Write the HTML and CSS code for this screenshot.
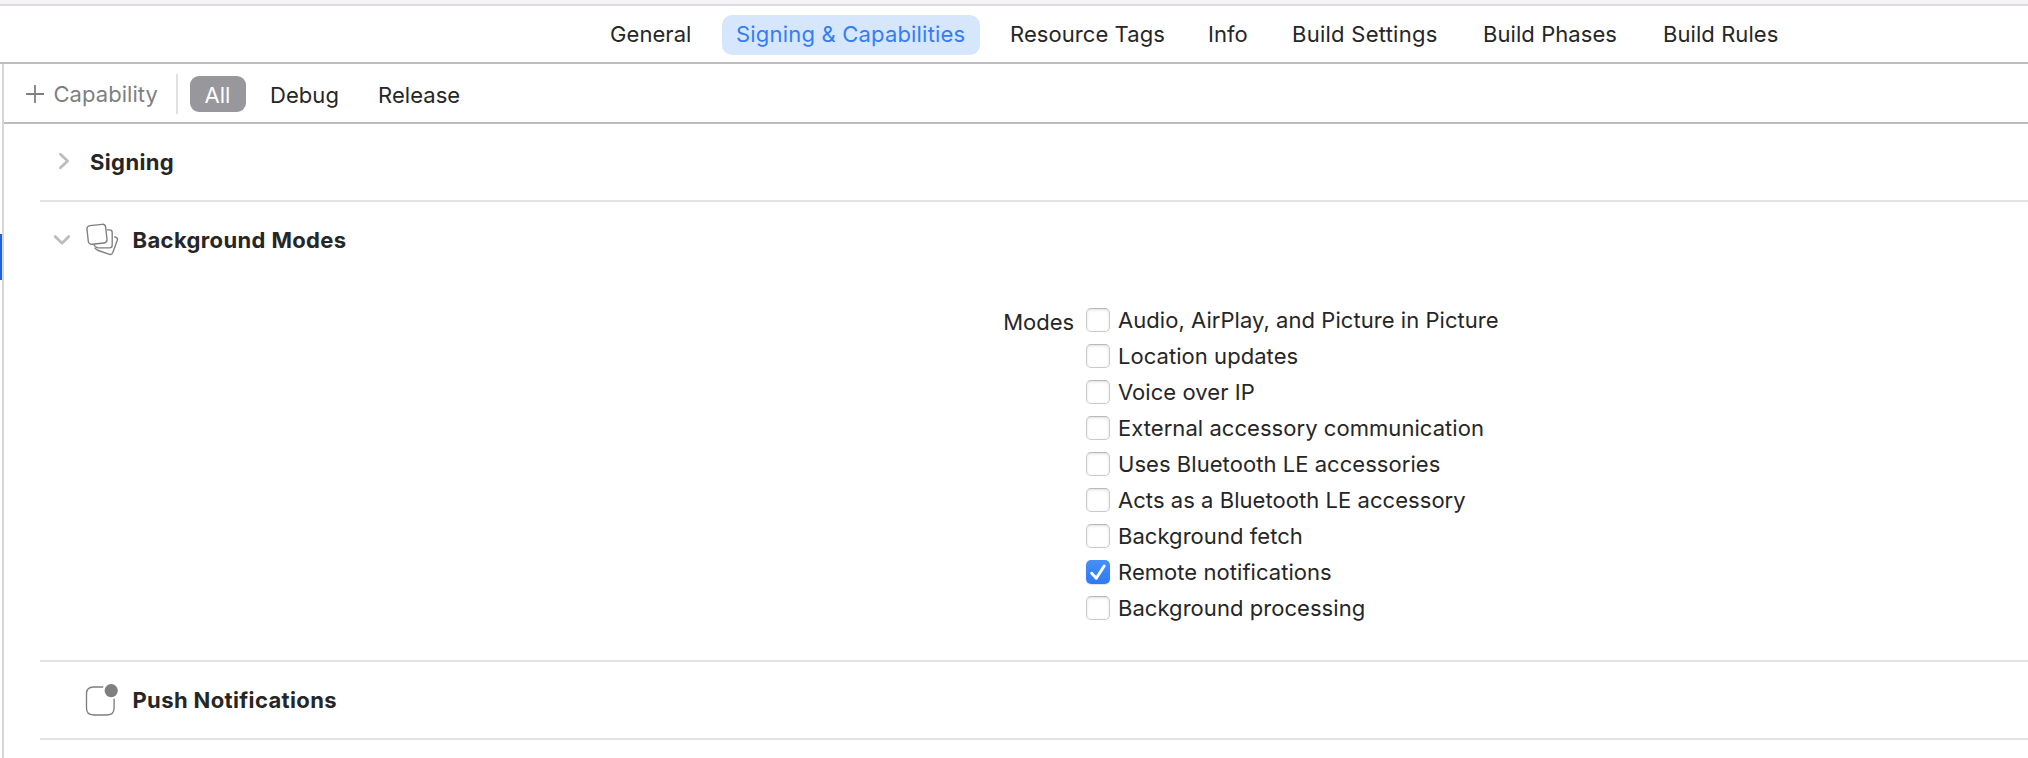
FILE: index.html
```html
<!DOCTYPE html>
<html lang="en">
<head>
<meta charset="utf-8">
<title>Signing &amp; Capabilities</title>
<link rel="stylesheet" href="styles.css">
</head>
<body>
<div class="window">
  <nav class="tabs">
    <span class="tab">General</span>
    <span class="tab tab-active">Signing &amp; Capabilities</span>
    <span class="tab">Resource Tags</span>
    <span class="tab">Info</span>
    <span class="tab tab-wide">Build Settings</span>
    <span class="tab">Build Phases</span>
    <span class="tab">Build Rules</span>
  </nav>
  <div class="body">
    <aside class="navigator"><div class="selection"></div></aside>
    <main class="editor">
      <div class="toolbar">
        <div class="add">
          <svg class="plus" width="18" height="18" viewBox="0 0 18 18"><path d="M9 .5v17M.5 9h17"/></svg>
          <span>Capability</span>
        </div>
        <div class="separator"></div>
        <span class="scope scope-active">All</span>
        <span class="scope scope-debug">Debug</span>
        <span class="scope">Release</span>
      </div>

      <section class="section signing">
        <div class="head">
          <svg class="chevron" width="18" height="18" viewBox="0 0 18 18"><path d="M6.4 2.2 13.6 9l-7.2 6.8"/></svg>
          <h2 class="title">Signing</h2>
        </div>
      </section>

      <section class="section modes">
        <div class="head">
          <svg class="chevron" width="18" height="18" viewBox="0 0 18 18"><path d="M2.2 5.4 9 12.2l6.8-6.8"/></svg>
          <svg class="icon" width="34" height="34" viewBox="0 0 34 34">
            <path d="M28.2 13.7l1.6.6q2.2.8 1.5 3l-4.6 12.5q-.9 2.2-3.1 1.5l-11.3-3.8q-2.3-.8-3.7-2.8"/>
            <path d="M21.1 6.9h2.5q2.6 0 2.6 2.6v12.7q0 2.6-2.6 2.6H12.2q-3 0-4.6-3.7"/>
            <rect x="1.6" y="1.9" width="18.8" height="18.8" rx="3.4" transform="rotate(-6 11 11.3)"/>
          </svg>
          <h2 class="title">Background Modes</h2>
        </div>
        <div class="form">
          <span class="form-label">Modes</span>
          <div class="options">
            <div class="option"><span class="box"></span>Audio, AirPlay, and Picture in Picture</div>
            <div class="option"><span class="box"></span>Location updates</div>
            <div class="option"><span class="box"></span>Voice over IP</div>
            <div class="option"><span class="box"></span>External accessory communication</div>
            <div class="option"><span class="box"></span>Uses Bluetooth LE accessories</div>
            <div class="option"><span class="box"></span>Acts as a Bluetooth LE accessory</div>
            <div class="option"><span class="box"></span>Background fetch</div>
            <div class="option"><span class="box box-checked"><svg width="24" height="24" viewBox="0 0 24 24"><path d="M5.7 13.2 10.3 18.3 18.2 6"/></svg></span>Remote notifications</div>
            <div class="option"><span class="box"></span>Background processing</div>
          </div>
        </div>
      </section>

      <section class="section push">
        <div class="head">
          <svg class="icon icon-push" width="34" height="34" viewBox="0 0 34 34">
            <path d="M18.2 4H8.4Q1.5 4 1.5 10.9v14.2Q1.5 32 8.4 32h13.8q6.9 0 6.9-6.9v-9.3"/>
            <circle cx="26.2" cy="7.6" r="6.6"/>
          </svg>
          <h2 class="title">Push Notifications</h2>
        </div>
      </section>
    </main>
  </div>
</div>
</body>
</html>
```
FILE: styles.css
```css
* { box-sizing: border-box; }

body {
  margin: 0;
  background: #fff;
  color: #262626;
  font: 22px/28px Inter, "Liberation Sans", sans-serif;
  letter-spacing: 0.05px;
  white-space: nowrap;
}

.window {
  display: flex;
  flex-direction: column;
  height: 758px;
  border-top: 4px solid #f6f4f6;
  overflow: hidden;
}

.tabs {
  display: grid;
  grid-template-columns: 126px 273px 198px 84px 191px 180px 145px;
  align-items: center;
  height: 60px;
  padding: 2px 0 0 596px;
  border-top: 2px solid #dcdadc;
  border-bottom: 2px solid #bdbdbd;
  letter-spacing: 0.07px;
}

.tab {
  justify-self: start;
  height: 40px;
  padding: 5px 14px 7px 15px;
  border-radius: 10px;
}

.tab:first-child { padding-left: 14px; }

.tab-wide { letter-spacing: 0.26px; }

.tab-active {
  width: 258px;
  padding-left: 14px;
  background: #d6e6fd;
  color: #337df7;
  letter-spacing: 0.19px;
}

.body {
  display: flex;
  flex: 1;
  min-height: 0;
}

.navigator {
  width: 4px;
  padding-top: 170px;
  border-right: 2px solid #d6d6d6;
}

.selection {
  height: 46px;
  background: #1f61dc;
}

.editor { flex: 1; }

.toolbar {
  display: flex;
  align-items: center;
  height: 60px;
  padding: 2px 0 0 22px;
  border-bottom: 2px solid #bdbdbd;
}

.add {
  display: flex;
  align-items: center;
  gap: 9.5px;
  width: 150px;
  color: #7f7f7f;
}

.plus {
  fill: none;
  stroke: #7f7f7f;
  stroke-width: 1.8;
  stroke-linecap: round;
}

.separator {
  width: 2px;
  height: 40px;
  margin-right: 12px;
  background: #e0e0e0;
}

.scope { padding-top: 2px; }

.scope-active {
  width: 56px;
  height: 36px;
  margin-right: 24px;
  padding: 5px 1px 0 0;
  border-radius: 9px;
  background: #98979c;
  color: #fff;
  text-align: center;
}

.scope-debug { width: 108px; }

.section {
  margin-left: 36px;
  border-bottom: 2px solid #e3e3e3;
}

.head {
  display: flex;
  align-items: center;
  height: 76px;
}

.title {
  margin: 0;
  font-size: 22px;
  font-weight: 700;
  letter-spacing: 0.37px;
}

.chevron {
  margin-left: 13px;
  fill: none;
  stroke: #bdbdbd;
  stroke-width: 2.8;
  stroke-linecap: round;
  stroke-linejoin: round;
}

.signing .chevron { margin: 0 19px 2px 14px; }
.signing .title { margin-left: -1px; }

.modes { height: 460px; }

.icon {
  margin: 0 12.5px 0 15px;
  fill: #fff;
  stroke: #7f7f7f;
  stroke-width: 1.35;
}

.icon-push { margin: 0 13.5px 0 45px; }

.icon-push path { fill: none; }

.icon-push circle {
  fill: #7f7f7f;
  stroke: none;
}

.form {
  display: grid;
  grid-template-columns: 1034px auto;
  column-gap: 12px;
  padding-top: 24px;
}

.form-label {
  padding-top: 6px;
  text-align: right;
  letter-spacing: -0.05px;
}

.option {
  display: flex;
  align-items: center;
  gap: 8px;
  height: 36px;
}

.box {
  width: 24px;
  height: 24px;
  border: 1px solid #cbcbcb;
  border-top-color: #b9b9b9;
  border-radius: 5px;
  background: #fff;
  box-shadow: inset 0 1px 3px rgba(0, 0, 0, 0.13);
}

.box-checked {
  border: 0;
  background: linear-gradient(#4590f8, #2f79f6);
  box-shadow: 0 1px 1px rgba(0, 60, 160, 0.15);
}

.box-checked svg {
  display: block;
  fill: none;
  stroke: #fff;
  stroke-width: 2.9;
  stroke-linecap: round;
  stroke-linejoin: round;
}
```
